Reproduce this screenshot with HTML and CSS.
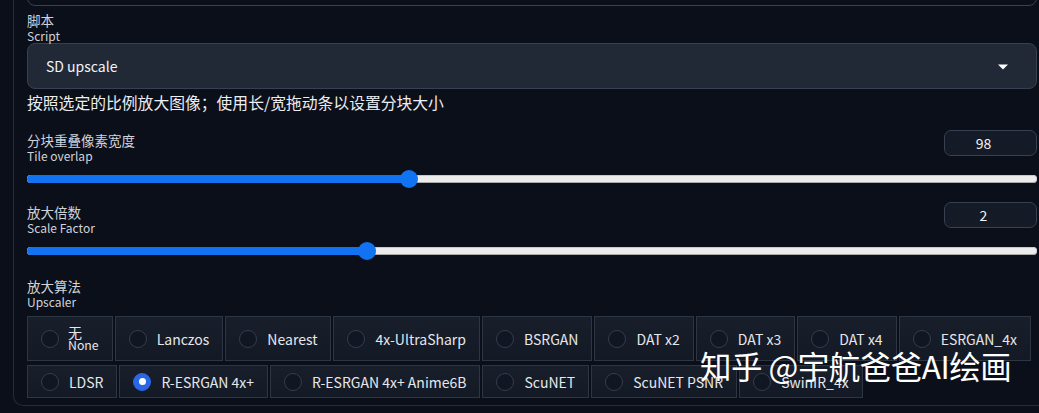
FILE: index.html
```html
<!DOCTYPE html>
<html>
<head>
<meta charset="utf-8">
<link rel="stylesheet" href="styles.css">
</head>
<body>
<div class="panel">
  <div class="topbox"></div>

  <div class="label label-script">
    <div class="zh">脚本</div>
    <div class="en">Script</div>
  </div>
  <div class="dropdown">
    <span>SD upscale</span>
    <svg class="caret" width="10" height="6" viewBox="0 0 10 6"><path d="M0 0.5 L10 0.5 L5 5.5 Z" fill="#ffffff"/></svg>
  </div>
  <div class="desc">按照选定的比例放大图像；使用长/宽拖动条以设置分块大小</div>

  <div class="slider-block first">
    <div class="slider-head">
      <div class="label pad">
        <div class="zh">分块重叠像素宽度</div>
        <div class="en">Tile overlap</div>
      </div>
      <div class="numbox">98</div>
    </div>
    <div class="slider-wrap">
      <div class="track">
        <div class="fill" style="width:382px"></div>
        <div class="thumb" style="left:382px"></div>
      </div>
    </div>
  </div>

  <div class="slider-block second">
    <div class="slider-head">
      <div class="label pad">
        <div class="zh">放大倍数</div>
        <div class="en">Scale Factor</div>
      </div>
      <div class="numbox">2</div>
    </div>
    <div class="slider-wrap">
      <div class="track">
        <div class="fill" style="width:340px"></div>
        <div class="thumb" style="left:340px"></div>
      </div>
    </div>
  </div>

  <div class="label label-upscaler">
    <div class="zh">放大算法</div>
    <div class="en">Upscaler</div>
  </div>

  <div class="radios">
    <div class="row row1">
      <label class="item"><span class="dot"></span><span class="two"><span class="two-zh">无</span><span class="two-en">None</span></span></label>
      <label class="item"><span class="dot"></span><span>Lanczos</span></label>
      <label class="item"><span class="dot"></span><span>Nearest</span></label>
      <label class="item"><span class="dot"></span><span>4x-UltraSharp</span></label>
      <label class="item"><span class="dot"></span><span>BSRGAN</span></label>
      <label class="item"><span class="dot"></span><span>DAT x2</span></label>
      <label class="item"><span class="dot"></span><span>DAT x3</span></label>
      <label class="item"><span class="dot"></span><span>DAT x4</span></label>
      <label class="item"><span class="dot"></span><span>ESRGAN_4x</span></label>
    </div>
    <div class="row row2">
      <label class="item"><span class="dot"></span><span>LDSR</span></label>
      <label class="item"><span class="dot checked"></span><span>R-ESRGAN 4x+</span></label>
      <label class="item"><span class="dot"></span><span>R-ESRGAN 4x+ Anime6B</span></label>
      <label class="item"><span class="dot"></span><span>ScuNET</span></label>
      <label class="item"><span class="dot"></span><span>ScuNET PSNR</span></label>
      <label class="item"><span class="dot"></span><span>SwinIR_4x</span></label>
    </div>
  </div>
</div>
<div class="watermark">知乎 @宇航爸爸AI绘画</div>
</body>
</html>
```

FILE: styles.css
```css
html, body {
  margin: 0;
  padding: 0;
}
body {
  background: #0b0f19;
  width: 1039px;
  height: 413px;
  overflow: hidden;
  position: relative;
  font-family: "Noto Sans CJK SC", "Noto Sans", sans-serif;
  color: #e5e7eb;
}
.panel {
  margin-left: 13px;
  border-left: 1px solid #252b37;
  border-bottom: 1px solid #252b37;
  border-bottom-left-radius: 10px;
  padding: 0 14px 7px 13px;
  width: 1010px;
}
.topbox {
  margin-top: -20px;
  height: 24px;
  border: 1px solid #374151;
  border-radius: 8px;
  background: #0b0f19;
}
.label {
  line-height: 15px;
  color: #cfd3db;
}
.label .zh {
  font-size: 13.5px;
  height: 15px;
}
.label .en {
  font-size: 12px;
  height: 15px;
}
.label-script {
  margin-top: 7px;
}
.dropdown {
  height: 46px;
  box-sizing: border-box;
  border: 1px solid #374151;
  border-radius: 8px;
  background: #212937;
  display: flex;
  align-items: center;
  justify-content: space-between;
  padding: 0 28px 0 18px;
  font-size: 14px;
  color: #f3f4f6;
}
.caret {
  display: block;
  margin-top: 2px;
}
.desc {
  margin-top: 4px;
  font-size: 15.8px;
  line-height: 20px;
  color: #eceef2;
}
.slider-block.first {
  margin-top: 17px;
}
.slider-block.second {
  margin-top: 11px;
}
.slider-head {
  display: flex;
  justify-content: space-between;
  align-items: flex-start;
}
.label.pad {
  padding-top: 3px;
  margin-bottom: 1px;
}
.numbox {
  width: 93px;
  height: 26px;
  box-sizing: border-box;
  border: 1px solid #374151;
  border-radius: 7px;
  background: #151b26;
  display: flex;
  align-items: center;
  justify-content: center;
  padding-right: 14px;
  font-size: 14px;
  color: #f3f4f6;
}
.slider-wrap {
  margin-top: 3px;
  height: 24px;
  display: flex;
  align-items: center;
}
.track {
  position: relative;
  flex: 1;
  height: 8px;
  border-radius: 4px;
  background: #ececec;
  box-shadow: inset 0 -1px 0 #a9a9a9, inset 0 1px 0 #c9c9c9;
}
.fill {
  height: 8px;
  border-radius: 4px 0 0 4px;
  background: #1273f2;
}
.thumb {
  position: absolute;
  top: 50%;
  width: 18px;
  height: 18px;
  margin: -9px 0 0 -9px;
  border-radius: 50%;
  background: #1273f2;
}
.label-upscaler {
  margin-top: 16px;
}
.radios {
  margin-top: 7px;
}
.row {
  display: flex;
  gap: 2px;
}
.row2 {
  margin-top: 4px;
}
.item {
  box-sizing: border-box;
  display: flex;
  align-items: center;
  gap: 10px;
  padding: 0 13px 0 13px;
  border: 1px solid #2e3644;
  background: linear-gradient(#181e2a, #131925);
  font-size: 14px;
  color: #e5e7eb;
  white-space: nowrap;
}
.row1 .item {
  height: 45px;
}
.row2 .item {
  height: 33px;
}
.dot {
  flex: none;
  width: 18px;
  height: 18px;
  box-sizing: border-box;
  border-radius: 50%;
  border: 1px solid #353d4b;
  background: #111722;
  position: relative;
}
.dot.checked {
  background: #2a66e6;
  border-color: #2a66e6;
}
.dot.checked::after {
  content: "";
  position: absolute;
  left: 50%;
  top: 50%;
  width: 7px;
  height: 7px;
  margin: -3.5px 0 0 -3.5px;
  border-radius: 50%;
  background: #ffffff;
}
.two {
  display: flex;
  flex-direction: column;
  line-height: 13px;
  margin-left: -1px;
  padding-top: 1px;
}
.two-zh {
  font-size: 14px;
}
.two-en {
  font-size: 12.3px;
}
.watermark {
  position: absolute;
  left: 700px;
  top: 345px;
  font-size: 31.5px;
  line-height: 40px;
  color: #ffffff;
  white-space: nowrap;
  letter-spacing: -0.5px;
}
```
